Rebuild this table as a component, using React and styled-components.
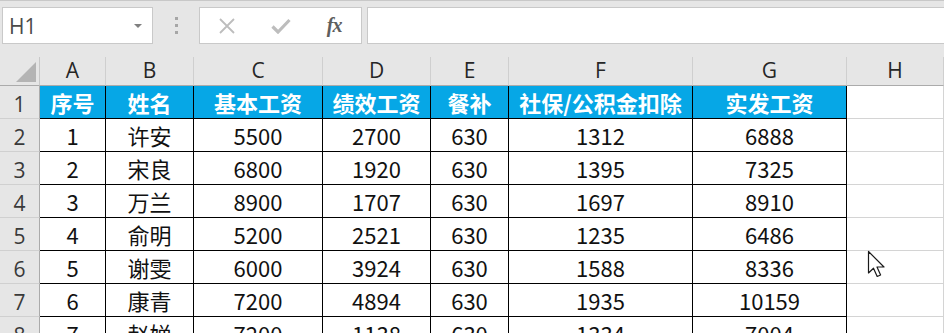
import React from 'react';
import styled, { createGlobalStyle } from 'styled-components';

const GlobalStyle = createGlobalStyle`
  html, body {
    margin: 0;
    padding: 0;
    background: #ffffff;
  }
  body {
    overflow: hidden;
  }
`;

// * ----------- DATA ---------- *
const columns = [
  { key: 'A', width: 66 },
  { key: 'B', width: 88 },
  { key: 'C', width: 129 },
  { key: 'D', width: 108 },
  { key: 'E', width: 78 },
  { key: 'F', width: 184 },
  { key: 'G', width: 154 },
  { key: 'H', width: 97 },
];

const headers = ['序号', '姓名', '基本工资', '绩效工资', '餐补', '社保/公积金扣除', '实发工资'];

const rows = [
  [1, '许安', 5500, 2700, 630, 1312, 6888],
  [2, '宋良', 6800, 1920, 630, 1395, 7325],
  [3, '万兰', 8900, 1707, 630, 1697, 8910],
  [4, '俞明', 5200, 2521, 630, 1235, 6486],
  [5, '谢雯', 6000, 3924, 630, 1588, 8336],
  [6, '康青', 7200, 4894, 630, 1935, 10159],
  [7, '赵婵', 7200, 1138, 630, 1334, 7004],
];

// * ----------- STYLE ---------- *
const Window = styled.div`
  position: relative;
  width: 944px;
  height: 333px;
  overflow: hidden;
  background: #ffffff;
`;

const FormulaBar = styled.div`
  display: flex;
  align-items: flex-start;
  height: 57px;
  box-sizing: border-box;
  padding: 6px 0 0 2px;
  background: #e6e6e6;
  border-top: 1px solid #c8c8c8;
`;

const NameBox = styled.div`
  display: flex;
  align-items: center;
  justify-content: space-between;
  width: 151px;
  height: 37px;
  box-sizing: border-box;
  padding: 0 10px 0 6px;
  background: #ffffff;
  border: 1px solid #c9c9c9;
  font-family: "Open Sans", "Noto Sans", sans-serif;
  font-size: 21px;
  color: #4a4a4a;
`;

const Caret = styled.span`
  width: 0;
  height: 0;
  border-left: 4px solid transparent;
  border-right: 4px solid transparent;
  border-top: 4px solid #808080;
`;

const Splitter = styled.div`
  display: flex;
  flex-direction: column;
  align-items: center;
  justify-content: center;
  gap: 4px;
  width: 46px;
  height: 37px;
`;

const Dot = styled.span`
  width: 3px;
  height: 3px;
  background: #a6a6a6;
`;

const ActionBox = styled.div`
  display: flex;
  align-items: center;
  width: 163px;
  height: 37px;
  box-sizing: border-box;
  background: #ffffff;
  border: 1px solid #c9c9c9;
`;

const Action = styled.span`
  display: flex;
  align-items: center;
  justify-content: center;
  width: 54px;
  height: 100%;
  color: ${p => (p.$dim ? '#bdbdbd' : '#666666')};
`;

const Fx = styled.span`
  font-family: "Liberation Serif", serif;
  font-style: italic;
  font-weight: bold;
  font-size: 20px;
  color: #5e5e5e;
  letter-spacing: -1px;
`;

const FormulaInput = styled.div`
  flex: 1;
  height: 37px;
  margin-left: 5px;
  box-sizing: border-box;
  background: #ffffff;
  border: 1px solid #c9c9c9;
  border-right: none;
`;

const Sheet = styled.div`
  display: grid;
  grid-template-columns: 40px ${columns.map(c => c.width + 'px').join(' ')} 1fr;
  grid-auto-rows: 33px;
  grid-template-rows: 29px;
`;

const Corner = styled.div`
  position: relative;
  background: #e6e6e6;
  border-right: 1px solid #c8c8c8;
  border-bottom: 1px solid #ababab;
`;

const CornerMark = styled.span`
  position: absolute;
  right: 3px;
  bottom: 3px;
  width: 0;
  height: 0;
  border-left: 20px solid transparent;
  border-bottom: 20px solid #b4b4b4;
`;

const ColHead = styled.div`
  display: flex;
  align-items: flex-end;
  justify-content: center;
  padding-bottom: 1px;
  box-sizing: border-box;
  background: #e6e6e6;
  border-right: 1px solid #cfcfcf;
  border-bottom: 1px solid #ababab;
  font-family: "Open Sans", "Noto Sans", sans-serif;
  font-size: 21px;
  color: #262626;
`;

const RowHead = styled.div`
  display: flex;
  align-items: flex-end;
  justify-content: center;
  padding-bottom: 0;
  box-sizing: border-box;
  background: #e6e6e6;
  border-right: 1px solid #ababab;
  border-bottom: 1px solid #d0d0d0;
  font-family: "Open Sans", "Noto Sans", sans-serif;
  font-size: 21px;
  color: #3a3a3a;
`;

const Cell = styled.div`
  display: flex;
  align-items: center;
  justify-content: center;
  box-sizing: border-box;
  white-space: nowrap;
  overflow: hidden;
  background: ${p => (p.$head ? '#06a7e6' : '#ffffff')};
  border-right: 1px solid ${p => (p.$plain ? '#d4d4d4' : '#000000')};
  border-bottom: 1px solid ${p => (p.$plain ? '#d4d4d4' : '#000000')};
  font-family: "Noto Sans CJK SC", "Noto Sans", sans-serif;
  font-size: 22px;
  font-weight: ${p => (p.$head ? 700 : 400)};
  color: ${p => (p.$head ? '#ffffff' : '#111111')};
`;

const Pointer = styled.svg`
  position: absolute;
  left: 867px;
  top: 250px;
`;

const CrossIcon = () => (
  <svg width="18" height="18" viewBox="0 0 18 18">
    <path d="M2 2 L16 16 M16 2 L2 16" stroke="currentColor" strokeWidth="1.8" fill="none" />
  </svg>
);

const CheckIcon = () => (
  <svg width="20" height="16" viewBox="0 0 20 16">
    <path d="M1.5 8.5 L7 14 L18.5 2" stroke="currentColor" strokeWidth="3.2" fill="none" />
  </svg>
);

const App = () => {
  return (
    <Window>
      <GlobalStyle />
      <FormulaBar>
        <NameBox>
          H1
          <Caret />
        </NameBox>
        <Splitter>
          <Dot />
          <Dot />
          <Dot />
        </Splitter>
        <ActionBox>
          <Action $dim><CrossIcon /></Action>
          <Action $dim><CheckIcon /></Action>
          <Action><Fx>fx</Fx></Action>
        </ActionBox>
        <FormulaInput />
      </FormulaBar>

      <Sheet>
        <Corner><CornerMark /></Corner>
        {columns.map(c => <ColHead key={c.key}>{c.key}</ColHead>)}
        <ColHead />

        <RowHead>1</RowHead>
        {headers.map(h => <Cell key={h} $head>{h}</Cell>)}
        <Cell $plain />
        <Cell $plain />

        {rows.map((r, i) => (
          <React.Fragment key={i}>
            <RowHead>{i + 2}</RowHead>
            {r.map((v, j) => <Cell key={j}>{v}</Cell>)}
            <Cell $plain />
            <Cell $plain />
          </React.Fragment>
        ))}
      </Sheet>

      <Pointer width="22" height="30" viewBox="0 0 22 30">
        <path
          d="M1.5 1.5 L1.5 23 L6.5 18.2 L10.2 26.5 L13.6 25 L10 17 L17 17 Z"
          fill="#ffffff"
          stroke="#1a1a1a"
          strokeWidth="1.2"
          strokeLinejoin="round"
        />
      </Pointer>
    </Window>
  );
};

export default App;
